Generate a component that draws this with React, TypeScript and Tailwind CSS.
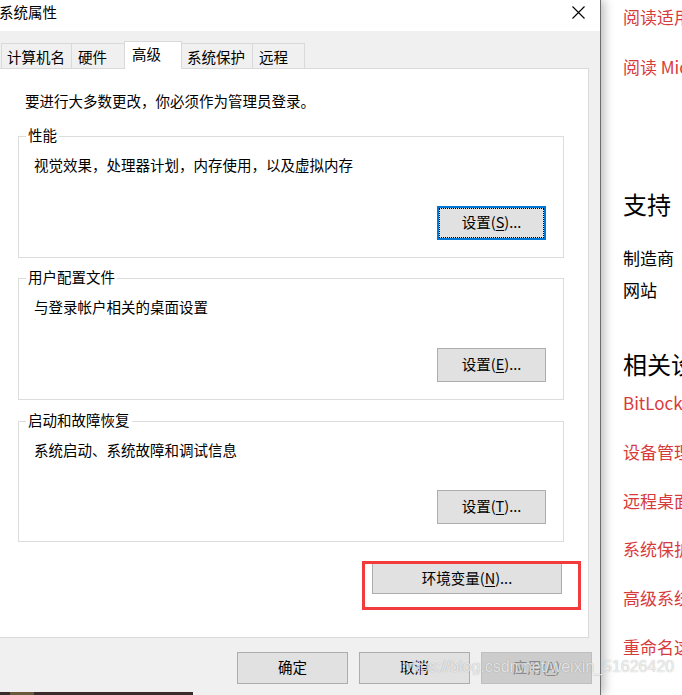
import React from "react";

function Btn({
  label,
  u,
  rest,
  focused,
  disabled,
  className,
}: {
  label: string;
  u?: string;
  rest?: string;
  focused?: boolean;
  disabled?: boolean;
  className: string;
}) {
  const base = disabled
    ? "bg-[#cccccc] border border-[#bfbfbf] text-[#8a8a8a]"
    : focused
    ? "bg-[#e1e1e1] border-2 border-[#0078d7] text-black"
    : "bg-[#e1e1e1] border border-[#adadad] text-black";
  return (
    <div className={`${base} ${className} flex items-center justify-center shrink-0`}>
      <div
        className={`w-full h-full flex items-center justify-center pb-[2px] text-[14.5px] leading-[20px] ${
          focused ? "border border-dotted border-black" : ""
        }`}
      >
        <span>
          {label}
          {u !== undefined && (
            <>
              (<span className="underline underline-offset-2">{u}</span>){rest}
            </>
          )}
        </span>
      </div>
    </div>
  );
}

function Group({
  title,
  desc,
  btn,
  className,
}: {
  title: string;
  desc: string;
  btn: React.ReactNode;
  className: string;
}) {
  return (
    <div className={`relative ml-[18px] w-[546px] border border-[#dcdcdc] flex flex-col ${className}`}>
      <span className="absolute -top-[12px] left-[7px] bg-white px-[2px] text-[14.5px] leading-[20px] text-black">
        {title}
      </span>
      <div className="pt-[18px] pl-[15px] text-[14.5px] leading-[20px] text-black">{desc}</div>
      <div className="mt-auto mb-[17px] mr-[17px] self-end">{btn}</div>
    </div>
  );
}

export default function App() {
  return (
    <div className="relative w-[682px] h-[695px] flex overflow-hidden bg-white font-['Microsoft_YaHei','Noto_Sans_CJK_SC',sans-serif]">
      {/* Dialog */}
      <div className="relative z-10 w-[601px] shrink-0 flex flex-col border-r border-[#6e6e6e] shadow-[3px_0_10px_rgba(0,0,0,0.28)]">
        <div className="h-[31px] bg-white flex items-start justify-between">
          <span className="mt-[2px] -ml-[1px] text-[14.5px] leading-[20px] text-black">系统属性</span>
          <svg className="mt-[6px] mr-[15px]" width="13" height="13" viewBox="0 0 13 13">
            <path d="M0.5 0.5 L12.5 12.5 M12.5 0.5 L0.5 12.5" stroke="#000" strokeWidth="1.1" fill="none" />
          </svg>
        </div>
        <div className="flex-1 bg-[#f0f0f0] flex flex-col">
          {/* Tabs */}
          <div className="h-[37px] flex items-end pl-[1px] text-[14.5px] text-black">
            <div className="w-[70px] h-[25px] border-t border-l border-[#d9d9d9] flex items-center pl-[5px] pt-[1px] leading-[20px]">
              计算机名
            </div>
            <div className="w-[53px] h-[25px] border-t border-l border-[#d9d9d9] flex items-center pl-[6px] pt-[1px] leading-[20px]">
              硬件
            </div>
            <div className="relative z-10 -mb-[1px] w-[58px] h-[28px] bg-white border-t border-l border-r border-[#d9d9d9] flex items-center pl-[7px] pb-[3px] leading-[20px]">
              高级
            </div>
            <div className="w-[70px] h-[25px] border-t border-[#d9d9d9] flex items-center pl-[5px] pt-[1px] leading-[20px]">
              系统保护
            </div>
            <div className="w-[53px] h-[25px] border-t border-l border-r border-[#d9d9d9] flex items-center pl-[6px] pt-[1px] leading-[20px]">
              远程
            </div>
          </div>
          {/* Panel */}
          <div className="relative -ml-[1px] w-[590px] h-[570px] bg-white border border-[#d9d9d9] flex flex-col">
            <div className="mt-[22px] ml-[25px] text-[14.5px] leading-[20px] text-black">
              要进行大多数更改，你必须作为管理员登录。
            </div>
            <Group
              className="mt-[25px] h-[122px]"
              title="性能"
              desc="视觉效果，处理器计划，内存使用，以及虚拟内存"
              btn={<Btn focused label="设置" u="S" rest="..." className="w-[109px] h-[34px]" />}
            />
            <Group
              className="mt-[20px] h-[122px]"
              title="用户配置文件"
              desc="与登录帐户相关的桌面设置"
              btn={<Btn label="设置" u="E" rest="..." className="w-[109px] h-[34px]" />}
            />
            <Group
              className="mt-[21px] h-[121px]"
              title="启动和故障恢复"
              desc="系统启动、系统故障和调试信息"
              btn={<Btn label="设置" u="T" rest="..." className="w-[109px] h-[34px]" />}
            />
            <div className="mt-[21px] ml-[372px]">
              <Btn label="环境变量" u="N" rest="..." className="w-[190px] h-[31px]" />
            </div>
            {/* red annotation */}
            <div className="absolute left-[362px] top-[492px] w-[219px] h-[49px] border-[3px] border-[#f23b3b]" />
          </div>
          {/* Bottom buttons */}
          <div className="pt-[14px] pl-[237px] flex gap-[11px]">
            <Btn label="确定" className="w-[111px] h-[32px]" />
            <Btn label="取消" className="w-[111px] h-[32px]" />
            <Btn disabled label="应用" u="A" rest="" className="w-[111px] h-[32px]" />
          </div>
        </div>
        <div className="h-[3px] flex">
          <div className="w-[10px] bg-[#3a2c2a]" />
          <div className="w-[24px] bg-[#6b5a3a]" />
          <div className="w-[159px] bg-[#3a2c2a]" />
          <div className="flex-1 bg-[#f0f0f0]" />
        </div>
      </div>

      {/* Settings page behind */}
      <div className="flex-1 min-w-0 pl-[22px] flex flex-col whitespace-nowrap overflow-hidden">
        <div className="pt-[5px] text-[17px] leading-[24px] text-[#d83b3b]">阅读适用于我们服务的 Microsoft 服务协议</div>
        <div className="mt-[26px] text-[17px] leading-[24px] text-[#d83b3b]">阅读 Microsoft 软件许可条款</div>
        <div className="mt-[109px] text-[24px] leading-[32px] text-black">支持</div>
        <div className="mt-[26px] text-[17px] leading-[24px] text-black">制造商</div>
        <div className="mt-[8px] text-[17px] leading-[24px] text-black">网站</div>
        <div className="mt-[46px] text-[24px] leading-[32px] text-black">相关设置</div>
        <div className="mt-[11px] text-[17px] leading-[24px] text-[#d83b3b]">BitLocker 设置</div>
        <div className="mt-[25px] text-[17px] leading-[24px] text-[#d83b3b]">设备管理器</div>
        <div className="mt-[25px] text-[17px] leading-[24px] text-[#d83b3b]">远程桌面</div>
        <div className="mt-[24px] text-[17px] leading-[24px] text-[#d83b3b]">系统保护</div>
        <div className="mt-[25px] text-[17px] leading-[24px] text-[#d83b3b]">高级系统设置</div>
        <div className="mt-[25px] text-[17px] leading-[24px] text-[#d83b3b]">重命名这台电脑</div>
      </div>

      {/* watermark */}
      <div className="absolute z-20 left-[402px] top-[657px] text-[16px] leading-[20px] font-['Liberation_Sans',Arial,sans-serif] text-[rgba(255,255,255,0.75)] [text-shadow:0_0_1px_rgba(0,0,0,0.35)] whitespace-nowrap">
        https://blog.csdn.net/weixin_51626420
      </div>
    </div>
  );
}
